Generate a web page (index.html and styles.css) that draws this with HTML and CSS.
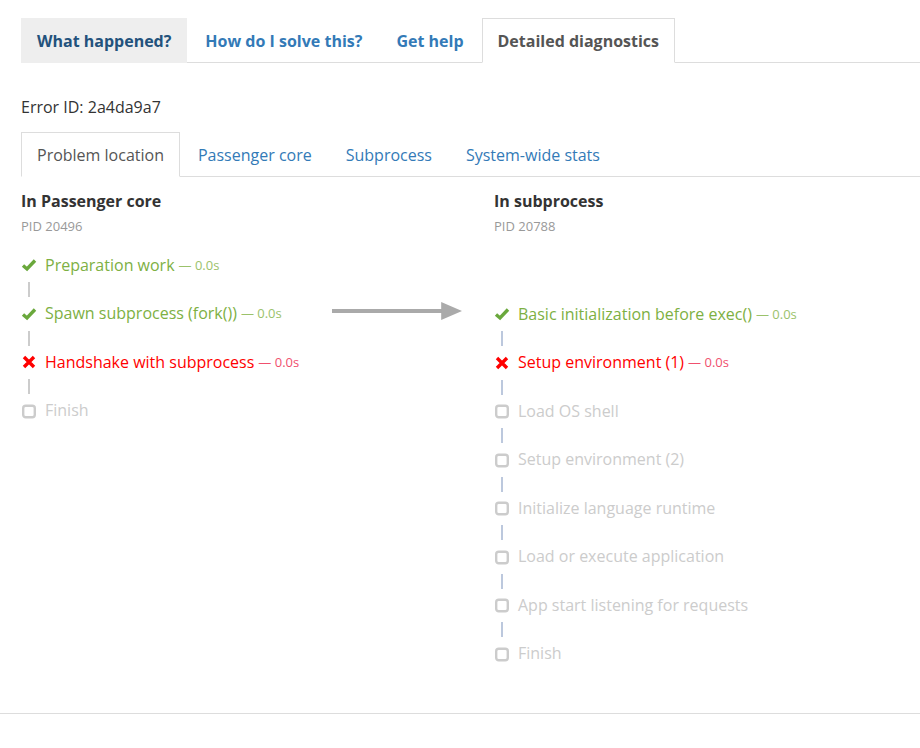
FILE: index.html
```html
<!DOCTYPE html>
<html lang="en">
<head>
    <meta charset="UTF-8">
    <title>Detailed diagnostics</title>
    <link rel="stylesheet" href="styles.css">
</head>
<body>
    <div class="page">
        <ul class="tabs tabs-main">
            <li class="hovered"><a href="#">What happened?</a></li>
            <li><a href="#">How do I solve this?</a></li>
            <li><a href="#">Get help</a></li>
            <li class="active"><a href="#">Detailed diagnostics</a></li>
        </ul>

        <p class="error-id">Error ID: 2a4da9a7</p>

        <ul class="tabs tabs-sub">
            <li class="active"><a href="#">Problem location</a></li>
            <li><a href="#">Passenger core</a></li>
            <li><a href="#">Subprocess</a></li>
            <li><a href="#">System-wide stats</a></li>
        </ul>

        <div class="columns">
            <div class="column core">
                <h4>In Passenger core</h4>
                <div class="pid">PID 20496</div>
                <ol class="steps">
                    <li class="step done"><svg class="icon" viewBox="0 0 16 16"><polyline points="2,8.5 6,12 14,3.5"/></svg>Preparation work <span class="dur">— 0.0s</span></li>
                    <li class="link"></li>
                    <li class="step done">
                        <svg class="icon" viewBox="0 0 16 16"><polyline points="2,8.5 6,12 14,3.5"/></svg>Spawn subprocess (fork()) <span class="dur">— 0.0s</span>
                        <svg class="arrow" viewBox="0 0 132 20"><line x1="0" y1="10" x2="112" y2="10"/><polygon points="110,1 131,10 110,19"/></svg>
                    </li>
                    <li class="link"></li>
                    <li class="step failed"><svg class="icon" viewBox="0 0 16 16"><path d="M3 3 L13 13 M13 3 L3 13"/></svg>Handshake with subprocess <span class="dur">— 0.0s</span></li>
                    <li class="link"></li>
                    <li class="step pending"><svg class="icon" viewBox="0 0 16 16"><rect x="2.2" y="2.7" width="11.6" height="11.6" rx="2.5"/></svg>Finish</li>
                </ol>
            </div>

            <div class="column sub">
                <h4>In subprocess</h4>
                <div class="pid">PID 20788</div>
                <ol class="steps">
                    <li class="spacer"></li>
                    <li class="step done"><svg class="icon" viewBox="0 0 16 16"><polyline points="2,8.5 6,12 14,3.5"/></svg>Basic initialization before exec() <span class="dur">— 0.0s</span></li>
                    <li class="link"></li>
                    <li class="step failed"><svg class="icon" viewBox="0 0 16 16"><path d="M3 3 L13 13 M13 3 L3 13"/></svg>Setup environment (1) <span class="dur">— 0.0s</span></li>
                    <li class="link"></li>
                    <li class="step pending"><svg class="icon" viewBox="0 0 16 16"><rect x="2.2" y="2.7" width="11.6" height="11.6" rx="2.5"/></svg>Load OS shell</li>
                    <li class="link"></li>
                    <li class="step pending"><svg class="icon" viewBox="0 0 16 16"><rect x="2.2" y="2.7" width="11.6" height="11.6" rx="2.5"/></svg>Setup environment (2)</li>
                    <li class="link"></li>
                    <li class="step pending"><svg class="icon" viewBox="0 0 16 16"><rect x="2.2" y="2.7" width="11.6" height="11.6" rx="2.5"/></svg>Initialize language runtime</li>
                    <li class="link"></li>
                    <li class="step pending"><svg class="icon" viewBox="0 0 16 16"><rect x="2.2" y="2.7" width="11.6" height="11.6" rx="2.5"/></svg>Load or execute application</li>
                    <li class="link"></li>
                    <li class="step pending"><svg class="icon" viewBox="0 0 16 16"><rect x="2.2" y="2.7" width="11.6" height="11.6" rx="2.5"/></svg>App start listening for requests</li>
                    <li class="link"></li>
                    <li class="step pending"><svg class="icon" viewBox="0 0 16 16"><rect x="2.2" y="2.7" width="11.6" height="11.6" rx="2.5"/></svg>Finish</li>
                </ol>
            </div>
        </div>
    </div>
    <hr class="footer-line">
</body>
</html>
```

FILE: styles.css
```css
body { margin: 0; font-family: "Open Sans", "Liberation Sans", sans-serif; font-size: 16px; line-height: 1.42857; color: #333; background: #fff; }
a { text-decoration: none; color: #337ab7; }

.page { padding: 18px 0 0 21px; }

.tabs { display: flex; list-style: none; margin: 0; padding: 0; border-bottom: 1px solid #ddd; }
.tabs li { margin: 0 2px -1px 0; }
.tabs a { display: block; padding: 11px 15px 10px; line-height: 22px; border: 1px solid transparent; }
.tabs li.active a { color: #555; background: #fff; border-color: #ddd; border-bottom-color: transparent; }
.tabs-main a { font-weight: 700; }
.tabs-main li.hovered a { background: #eee; color: #23527c; }

.error-id { margin: 33px 0 13px; }

.columns { display: grid; grid-template-columns: 473px 1fr; margin-top: 13px; }
.column h4 { margin: 0; font-size: 16px; font-weight: 700; color: #333; }
.pid { font-size: 13px; color: #999; margin-top: 4px; }

.steps { list-style: none; margin: 18px 0 0; padding: 0; }
.step { position: relative; display: flex; align-items: center; height: 24px; white-space: nowrap; }
.step .icon { width: 16px; height: 16px; margin-right: 8px; fill: none; }
.dur { font-size: 13px; margin-left: 4px; }
.link { height: 24.5px; padding-top: 5px; box-sizing: border-box; }
.link::before { content: ""; display: block; margin-left: 7px; width: 2px; height: 15px; background: #ccc; }
.sub .link::before { background: #bcc8dd; }
.spacer { height: 49px; }

.done { color: #7db043; }
.done .icon polyline { stroke: #6aa83c; stroke-width: 3.4; }
.done .dur { color: #9bc26b; }
.failed { color: #f00; }
.failed .icon path { stroke: #f00; stroke-width: 3.4; }
.failed .dur { color: #f0506e; }
.pending { color: #ccc; }
.pending .icon rect { stroke: #ccc; stroke-width: 2.4; }

.arrow { position: absolute; left: 311px; top: -1px; width: 131px; height: 20px; }
.arrow line { stroke: #aaa; stroke-width: 4; }
.arrow polygon { fill: #aaa; }

.footer-line { border: 0; border-top: 1px solid #ddd; margin: 47px 0 0; }
```
